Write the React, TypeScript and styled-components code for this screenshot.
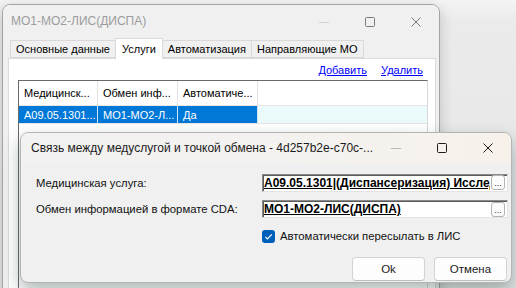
import React from 'react';
import styled, { createGlobalStyle } from 'styled-components';

const GlobalStyle = createGlobalStyle`
  html, body {
    margin: 0;
    padding: 0;
    width: 516px;
    height: 288px;
    overflow: hidden;
    background: #ebebeb;
  }
  body {
    font-family: "Liberation Sans", Arial, sans-serif;
    font-size: 11px;
    color: #000;
  }
`;

const Desktop = styled.div`
    position: relative;
    width: 516px;
    height: 288px;
    overflow: hidden;
    background: linear-gradient(180deg, #f4f4f4 0px, #ebebeb 20px, #e6e6e6 100%);
`;

const Window = styled.div<{ $x: number; $y: number; $w: number; $h: number; $modal?: boolean }>`
    position: absolute;
    left: ${p => p.$x}px;
    top: ${p => p.$y}px;
    width: ${p => p.$w}px;
    height: ${p => p.$h}px;
    box-sizing: border-box;
    display: flex;
    flex-direction: column;
    background: #f0f0f0;
    border: 1px solid ${p => p.$modal ? '#b4b4b4' : '#a3a3a3'};
    border-radius: 8px;
    overflow: hidden;
    box-shadow: ${p => p.$modal
        ? '0 8px 18px rgba(20, 50, 50, 0.35)'
        : '0 4px 14px rgba(0, 0, 0, 0.18)'};
`;

const TitleBar = styled.div<{ $h: number; $modal?: boolean }>`
    flex: none;
    height: ${p => p.$h}px;
    display: flex;
    align-items: center;
    background: ${p => p.$modal
        ? 'linear-gradient(90deg, #f2f2f2 0%, #f4f2ef 60%, #f7f1ea 100%)'
        : '#f0f0f0'};
`;

const Title = styled.div<{ $dim?: boolean; $pad: number }>`
    flex: 1;
    padding-left: ${p => p.$pad}px;
    padding-bottom: ${p => p.$dim ? 2 : 0}px;
    white-space: nowrap;
    overflow: hidden;
    color: ${p => p.$dim ? '#9c9c9c' : '#1b1b1b'};
    font-size: 12px;
`;

const CaptionButton = styled.div<{ $color: string }>`
    width: 46px;
    height: 100%;
    display: flex;
    align-items: center;
    justify-content: center;
    color: ${p => p.$color};
`;

const ParentBody = styled.div`
    flex: 1;
    display: flex;
    flex-direction: column;
    padding: 0 3px 0 5px;
`;

const TabStrip = styled.div`
    height: 20px;
    display: flex;
    align-items: flex-end;
    padding-left: 3px;
`;

const Tab = styled.div<{ $active?: boolean }>`
    position: relative;
    box-sizing: border-box;
    height: ${p => p.$active ? 21 : 18}px;
    margin-bottom: ${p => p.$active ? -1 : 0}px;
    margin-left: -1px;
    padding: 0 ${p => p.$active ? 6 : 5}px;
    display: flex;
    align-items: center;
    border: 1px solid #d9d9d9;
    border-bottom: ${p => p.$active ? 'none' : '1px solid #d9d9d9'};
    background: ${p => p.$active ? '#fff' : '#f0f0f0'};
    z-index: ${p => p.$active ? 2 : 1};
    white-space: nowrap;
`;

const TabPanel = styled.div`
    flex: 1;
    display: flex;
    flex-direction: column;
    background: #fff;
    border: 1px solid #dadada;
`;

const LinkRow = styled.div`
    height: 21px;
    display: flex;
    align-items: center;
    justify-content: flex-end;
    gap: 14px;
    padding-right: 12px;
`;

const Link = styled.span`
    color: #0000ff;
    text-decoration: underline;
`;

const Grid = styled.div`
    flex: 1;
    margin: 0 7px 0 9px;
    background: #fff;
    border-top: 1px solid #6a6a6a;
    border-left: 1px solid #6a6a6a;
    border-right: 1px solid #d8d8d8;
    display: flex;
    flex-direction: column;
`;

const GridRow = styled.div<{ $h: number }>`
    height: ${p => p.$h}px;
    display: flex;
    border-bottom: 1px solid #e6e6e6;
`;

const Cell = styled.div<{ $w: number; $selected?: boolean }>`
    width: ${p => p.$w}px;
    box-sizing: border-box;
    padding-left: 5px;
    display: flex;
    align-items: center;
    white-space: nowrap;
    overflow: hidden;
    border-right: 1px solid ${p => p.$selected ? '#cfe3f5' : '#e4e4e4'};
    background: ${p => p.$selected ? '#0078d7' : 'transparent'};
    color: ${p => p.$selected ? '#fff' : '#000'};
`;

const Filler = styled.div<{ $tint?: boolean }>`
    flex: 1;
    background: ${p => p.$tint ? '#ebfafa' : 'transparent'};
`;

const Form = styled.div`
    flex: 1;
    display: grid;
    grid-template-columns: 226px minmax(0, 1fr);
    row-gap: 7px;
    align-items: center;
    padding: 10px 3px 0 15px;
    font-size: 11.3px;
`;

const Label = styled.div`
    white-space: nowrap;
    color: #111;
`;

const Field = styled.div`
    min-width: 0;
    height: 18px;
    box-sizing: border-box;
    display: flex;
    align-items: center;
    background: #fff;
    border: 1px solid;
    border-color: #8a8a8a #e3e3e3 #e3e3e3 #8a8a8a;
    box-shadow: inset 1px 1px 0 #5a5a5a;
    padding-left: 1px;
`;

const FieldText = styled.div`
    flex: 1;
    min-width: 0;
    overflow: hidden;
    white-space: nowrap;
    font-size: 12px;
    font-weight: bold;
    text-decoration: underline;
`;

const EllipsisButton = styled.div`
    flex: none;
    width: 12px;
    height: 13px;
    margin: 0 2px 0 1px;
    border: 1px solid #b3b3b3;
    border-radius: 3px;
    background: #fbfbfb;
    font-size: 9px;
    line-height: 15px;
    text-align: center;
    color: #333;
    overflow: hidden;
`;

const CheckRow = styled.label`
    grid-column: 2;
    margin-top: 3px;
    display: flex;
    align-items: center;
    gap: 5px;
    color: #111;
`;

const CheckBox = styled.span`
    width: 13px;
    height: 13px;
    border-radius: 3px;
    background: #005fb8;
    display: flex;
    align-items: center;
    justify-content: center;
`;

const ButtonRow = styled.div`
    grid-column: 1 / -1;
    margin-top: 6px;
    padding-right: 1px;
    display: flex;
    justify-content: flex-end;
    gap: 9px;
`;

const Button = styled.button`
    width: 73px;
    height: 24px;
    box-sizing: border-box;
    border: 1px solid #d3d3d3;
    border-bottom-color: #bdbdbd;
    border-radius: 4px;
    background: #fdfdfd;
    font-family: inherit;
    font-size: 11.5px;
    color: #1b1b1b;
    padding: 0;
`;

const MinIcon = () => (
    <svg width="10" height="10" viewBox="0 0 10 10">
        <path d="M0 5.5h10" stroke="currentColor" strokeWidth="1" />
    </svg>
);

const MaxIcon = () => (
    <svg width="10" height="10" viewBox="0 0 10 10">
        <rect x="0.5" y="0.5" width="9" height="9" rx="1" fill="none" stroke="currentColor" strokeWidth="1" />
    </svg>
);

const CloseIcon = () => (
    <svg width="10" height="10" viewBox="0 0 10 10">
        <path d="M0.5 0.5L9.5 9.5M9.5 0.5L0.5 9.5" stroke="currentColor" strokeWidth="1" />
    </svg>
);

const Caption: React.FC<{ colors: [string, string, string] }> = ({ colors }) => (
    <>
        <CaptionButton $color={colors[0]}><MinIcon /></CaptionButton>
        <CaptionButton $color={colors[1]}><MaxIcon /></CaptionButton>
        <CaptionButton $color={colors[2]}><CloseIcon /></CaptionButton>
    </>
);

const tabs = ['Основные данные', 'Услуги', 'Автоматизация', 'Направляющие МО'];

const columns = [
    { title: 'Медицинск...', value: 'A09.05.1301...', w: 79 },
    { title: 'Обмен инф...', value: 'МО1-МО2-Л...', w: 80 },
    { title: 'Автоматиче...', value: 'Да', w: 80 },
];

const App: React.FC = () => {
    return (
        <>
            <GlobalStyle />
            <Desktop>

                <Window $x={2} $y={4} $w={438} $h={300}>
                    <TitleBar $h={33}>
                        <Title $dim $pad={8}>МО1-МО2-ЛИС(ДИСПА)</Title>
                        <Caption colors={['#d2d2d2', '#7a7a7a', '#7a7a7a']} />
                    </TitleBar>
                    <ParentBody>
                        <TabStrip>
                            {tabs.map((t, i) => (
                                <Tab key={t} $active={i === 1}>{t}</Tab>
                            ))}
                        </TabStrip>
                        <TabPanel>
                            <LinkRow>
                                <Link>Добавить</Link>
                                <Link>Удалить</Link>
                            </LinkRow>
                            <Grid>
                                <GridRow $h={24}>
                                    {columns.map(c => (
                                        <Cell key={c.title} $w={c.w}>{c.title}</Cell>
                                    ))}
                                    <Filler />
                                </GridRow>
                                <GridRow $h={17}>
                                    {columns.map(c => (
                                        <Cell key={c.title} $w={c.w} $selected>{c.value}</Cell>
                                    ))}
                                    <Filler $tint />
                                </GridRow>
                            </Grid>
                        </TabPanel>
                    </ParentBody>
                </Window>

                <Window $x={20} $y={132} $w={492} $h={151} $modal>
                    <TitleBar $h={30} $modal>
                        <Title $pad={10}>Связь между медуслугой и точкой обмена - 4d257b2e-c70c-...</Title>
                        <Caption colors={['#b8b8b8', '#1b1b1b', '#1b1b1b']} />
                    </TitleBar>
                    <Form>
                        <Label>Медицинская услуга:</Label>
                        <Field>
                            <FieldText>A09.05.1301|(Диспансеризация) Исследование уровня</FieldText>
                            <EllipsisButton>...</EllipsisButton>
                        </Field>

                        <Label>Обмен информацией в формате CDA:</Label>
                        <Field>
                            <FieldText>МО1-МО2-ЛИС(ДИСПА)</FieldText>
                            <EllipsisButton>...</EllipsisButton>
                        </Field>

                        <CheckRow>
                            <CheckBox>
                                <svg width="11" height="11" viewBox="0 0 11 11">
                                    <path d="M2.3 5.8L4.4 7.9L8.8 3.3" fill="none" stroke="#fff" strokeWidth="1.2" />
                                </svg>
                            </CheckBox>
                            Автоматически пересылать в ЛИС
                        </CheckRow>

                        <ButtonRow>
                            <Button>Ok</Button>
                            <Button>Отмена</Button>
                        </ButtonRow>
                    </Form>
                </Window>

            </Desktop>
        </>
    );
}

export default App;
